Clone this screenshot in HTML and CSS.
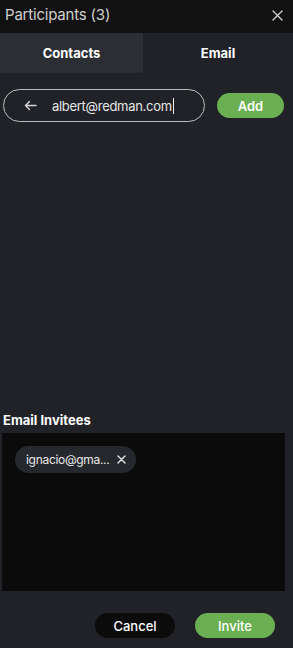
FILE: index.html
```html
<!DOCTYPE html>
<html>
<head>
<meta charset="utf-8">
<link rel="stylesheet" href="styles.css">
</head>
<body>
<div class="panel">
  <div class="header">
    <span class="title">Participants (3)</span>
    <svg class="close" width="11" height="11" viewBox="0 0 11 11"><path d="M1 1L10 10M10 1L1 10" stroke="#cfcfcf" stroke-width="1.4" stroke-linecap="round"/></svg>
  </div>
  <div class="tabs">
    <div class="tab tab-inactive">Contacts</div>
    <div class="tab tab-active">Email</div>
  </div>
  <div class="entry">
    <div class="input">
      <svg class="arrow" width="13" height="11" viewBox="0 0 13 11"><path d="M12 5.5H1.5M5.5 1.5L1.5 5.5L5.5 9.5" stroke="#d8d8d8" stroke-width="1.4" fill="none" stroke-linecap="round" stroke-linejoin="round"/></svg>
      <span class="value">albert@redman.com</span><span class="caret"></span>
    </div>
    <button class="btn btn-green btn-add">Add</button>
  </div>
  <div class="spacer"></div>
  <div class="label">Email Invitees</div>
  <div class="invitees">
    <div class="chip">
      <span>ignacio@gma...</span>
      <svg width="9" height="9" viewBox="0 0 9 9"><path d="M1 1L8 8M8 1L1 8" stroke="#e6e6e6" stroke-width="1.4" stroke-linecap="round"/></svg>
    </div>
  </div>
  <div class="actions">
    <button class="btn btn-dark">Cancel</button>
    <button class="btn btn-green">Invite</button>
  </div>
</div>
</body>
</html>
```
FILE: styles.css
```css
* { box-sizing: border-box; }
html, body { margin: 0; padding: 0; background: #202227; }
body { font-family: Inter, "Liberation Sans", Arial, sans-serif; color: #fff; }
.panel { width: 293px; height: 648px; display: flex; flex-direction: column; background: #202227; }
.header { height: 33px; background: #111111; display: flex; align-items: center; justify-content: space-between; padding: 0 10px 4px 5px; }
.title { font-size: 15px; color: #d0d0d0; letter-spacing: -0.2px; }
.close { margin-top: 2px; }
.tabs { display: flex; height: 40px; }
.tab { display: flex; align-items: center; justify-content: center; font-size: 13px; font-weight: 700; color: #fff; }
.tab-inactive { width: 143px; background: #2b2f34; }
.tab-active { flex: 1; background: #202227; }
.entry { display: flex; align-items: center; padding: 16px 9px 0 3px; gap: 12px; }
.input { width: 202px; height: 33px; border: 1px solid #bdbdbd; border-radius: 17px; display: flex; align-items: center; padding-left: 20px; }
.arrow { margin-right: 15px; }
.value { font-size: 13px; color: #e6e6e6; letter-spacing: -0.3px; }
.caret { width: 1px; height: 16px; background: #f0f0f0; margin-left: 1px; }
.btn { border: none; border-radius: 13px; height: 25px; font-family: inherit; font-size: 13px; color: #fff; padding: 0; }
.btn-add { width: 67px; font-weight: 600; }
.btn-green { background: #6aaf51; }
.btn-dark { background: #0b0b0b; }
.spacer { flex: 1; }
.label { font-size: 13px; font-weight: 700; padding-left: 3px; margin-bottom: 5px; }
.invitees { margin: 0 8px 0 2px; height: 158px; background: #0b0b0b; padding: 13px 0 0 13px; }
.chip { display: inline-flex; align-items: center; gap: 8px; height: 27px; padding: 0 10px 0 11px; border-radius: 14px; background: #25282d; font-size: 12px; color: #e8e8e8; letter-spacing: -0.3px; }
.actions { display: flex; justify-content: flex-end; gap: 20px; padding: 22px 18px 10px 0; }
.actions .btn { width: 80px; font-weight: 500; }
```
